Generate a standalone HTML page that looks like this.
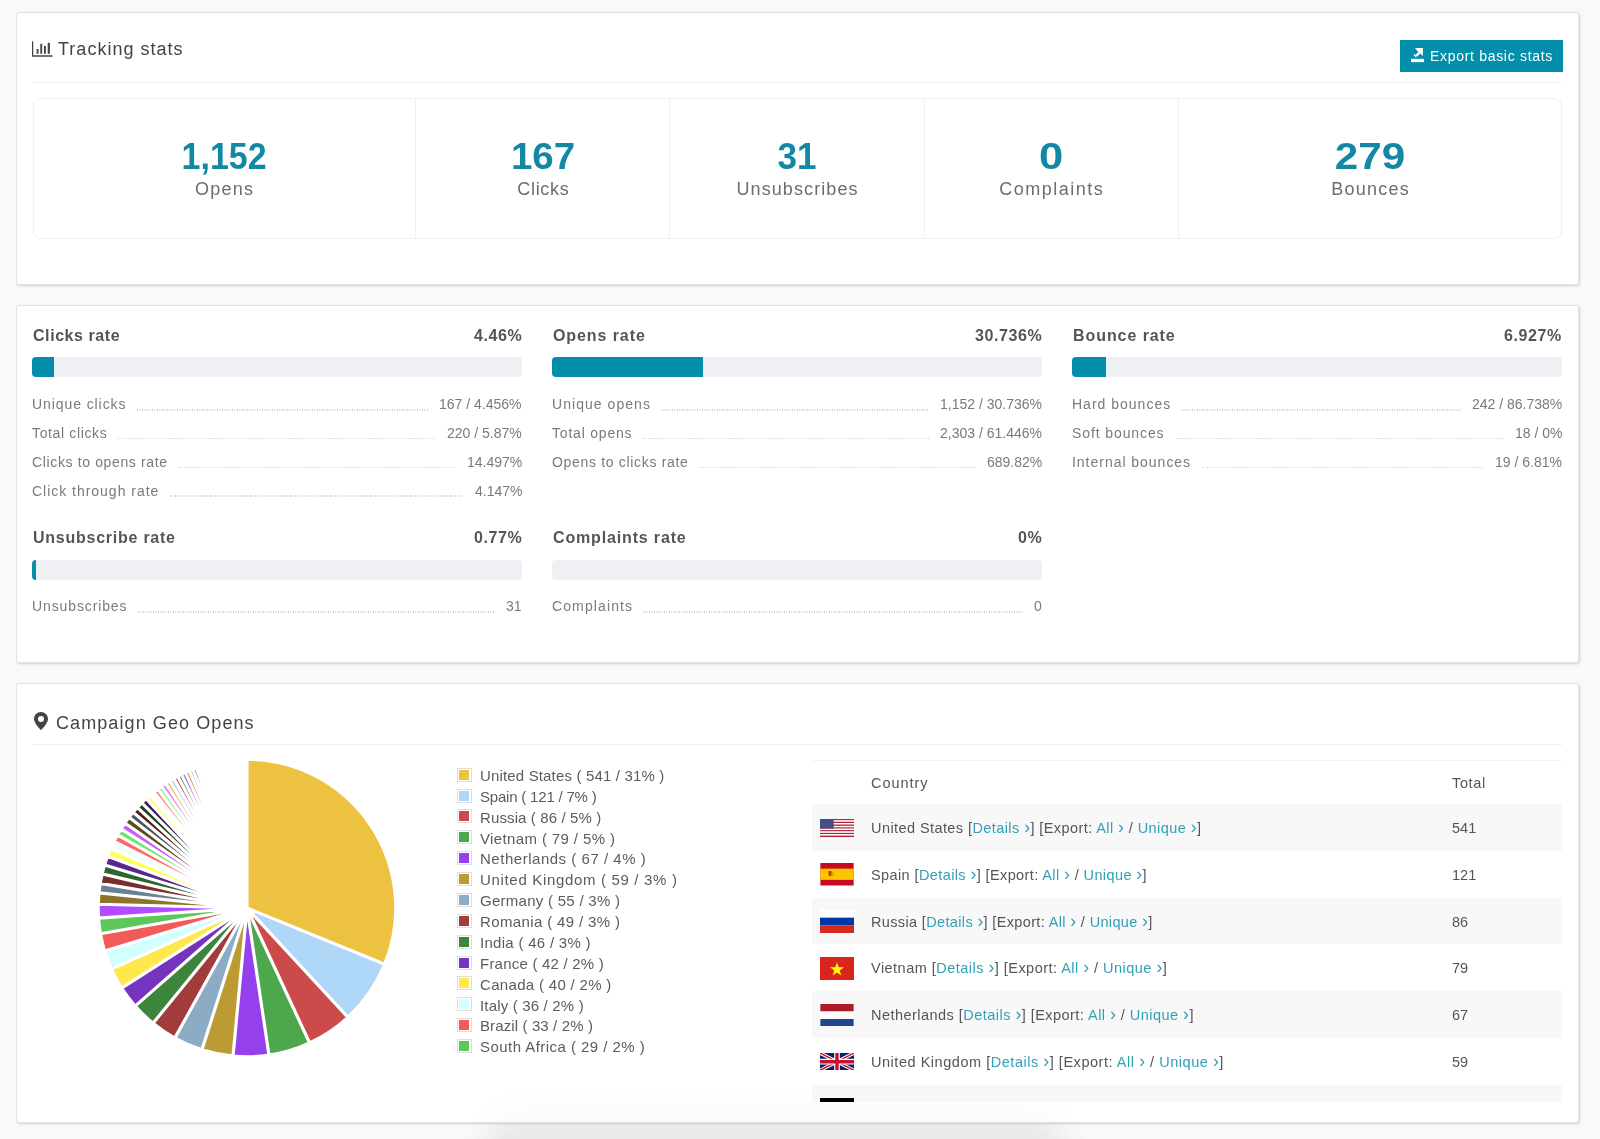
<!DOCTYPE html>
<html><head><meta charset="utf-8"><style>
*{box-sizing:border-box;margin:0;padding:0}
html,body{width:1600px;height:1139px;overflow:hidden}
body{background:#f9f9fa;font-family:"Liberation Sans",sans-serif;color:#555;position:relative}
.t{position:absolute;white-space:nowrap;will-change:transform}
.b{position:absolute}
.card{position:absolute;background:#fff;border:1px solid #e3e3e7;border-radius:3px;box-shadow:1px 1px 2.5px rgba(0,0,0,.16)}
.dots{position:absolute;height:1.5px;background-image:linear-gradient(to right,#c8c8c8 50%,transparent 50%);background-size:2.5px 1.5px}
.tbl{position:absolute;overflow:hidden}
.tbl a{color:#32a0b7}
.ch{font-style:normal;font-size:17.5px;line-height:0}
svg{position:absolute;display:block}
</style></head><body>
<div class="card" style="left:16px;top:12px;width:1563px;height:272.5px"></div>
<svg style="left:32px;top:41px" width="21" height="16" viewBox="0 0 21 16"><path d="M0.6 0.2v14.8H20.6" stroke="#444" stroke-width="1.3" fill="none"/><rect x="4.6" y="8" width="1.9" height="4.8" fill="#444"/><rect x="8.3" y="2.8" width="1.9" height="10" fill="#444"/><rect x="12" y="4.9" width="1.9" height="7.9" fill="#444"/><rect x="15.7" y="1.8" width="2.2" height="11" fill="#444"/></svg>
<div class="t " style="top:37.51px;font-size:18px;line-height:22.5px;left:58.00px;color:#444;letter-spacing:1.015px;">Tracking stats</div>
<div class="b" style="left:1400.00px;top:40.00px;width:163.00px;height:32.00px;background:#038eab"></div>
<svg style="left:1411px;top:48px" width="14" height="15" viewBox="0 0 14 15"><rect x="0" y="10.8" width="13" height="3.3" fill="#fff"/><path d="M3.9 0H11.9V8L9.2 5.6 6.3 8.5 4.6 6.8 7.3 4z" fill="#fff"/><path d="M2.5 6.9l1-1 2.3 2.3-1 1z" fill="#fff"/></svg>
<div class="t " style="top:47.65px;font-size:14px;line-height:17.5px;left:1429.50px;color:#fff;letter-spacing:0.694px;">Export basic stats</div>
<div class="b" style="left:32.00px;top:82.00px;width:1530.00px;height:1.00px;background:#efefef"></div>
<div class="b" style="left:33px;top:98px;width:1529px;height:141px;border:1px solid #efefef;border-radius:8px"></div>
<div class="b" style="left:415.10px;top:99.00px;width:1.00px;height:139.00px;background:#f1f1f1"></div>
<div class="b" style="left:668.90px;top:99.00px;width:1.00px;height:139.00px;background:#f1f1f1"></div>
<div class="b" style="left:923.50px;top:99.00px;width:1.00px;height:139.00px;background:#f1f1f1"></div>
<div class="b" style="left:1177.50px;top:99.00px;width:1.00px;height:139.00px;background:#f1f1f1"></div>
<div class="t " style="top:134.33px;font-size:36px;line-height:45.0px;left:-275.70px;width:1000px;text-align:center;text-indent:0px;color:#1388a5;font-weight:bold;"><span style="display:inline-block;transform:scaleX(0.943)">1,152</span></div>
<div class="t " style="top:177.51px;font-size:18px;line-height:22.5px;left:-275.70px;width:1000px;text-align:center;text-indent:1.25px;color:#6d6d6d;letter-spacing:1.25px;">Opens</div>
<div class="t " style="top:134.33px;font-size:36px;line-height:45.0px;left:42.50px;width:1000px;text-align:center;text-indent:0px;color:#1388a5;font-weight:bold;"><span style="display:inline-block;transform:scaleX(1.070)">167</span></div>
<div class="t " style="top:177.51px;font-size:18px;line-height:22.5px;left:42.50px;width:1000px;text-align:center;text-indent:0.72px;color:#6d6d6d;letter-spacing:0.72px;">Clicks</div>
<div class="t " style="top:134.33px;font-size:36px;line-height:45.0px;left:296.70px;width:1000px;text-align:center;text-indent:0px;color:#1388a5;font-weight:bold;"><span style="display:inline-block;transform:scaleX(0.974)">31</span></div>
<div class="t " style="top:177.51px;font-size:18px;line-height:22.5px;left:296.70px;width:1000px;text-align:center;text-indent:1.091px;color:#6d6d6d;letter-spacing:1.091px;">Unsubscribes</div>
<div class="t " style="top:134.33px;font-size:36px;line-height:45.0px;left:551.00px;width:1000px;text-align:center;text-indent:0px;color:#1388a5;font-weight:bold;"><span style="display:inline-block;transform:scaleX(1.211)">0</span></div>
<div class="t " style="top:177.51px;font-size:18px;line-height:22.5px;left:551.00px;width:1000px;text-align:center;text-indent:1.511px;color:#6d6d6d;letter-spacing:1.511px;">Complaints</div>
<div class="t " style="top:134.33px;font-size:36px;line-height:45.0px;left:870.00px;width:1000px;text-align:center;text-indent:0px;color:#1388a5;font-weight:bold;"><span style="display:inline-block;transform:scaleX(1.172)">279</span></div>
<div class="t " style="top:177.51px;font-size:18px;line-height:22.5px;left:870.00px;width:1000px;text-align:center;text-indent:1.25px;color:#6d6d6d;letter-spacing:1.25px;">Bounces</div>
<div class="card" style="left:16px;top:305px;width:1563px;height:358px"></div>
<div class="t " style="top:325.76px;font-size:16px;line-height:20.0px;left:32.50px;color:#555;letter-spacing:0.57px;font-weight:bold;">Clicks rate</div>
<div class="t " style="top:325.76px;font-size:16px;line-height:20.0px;right:1078.00px;color:#555;letter-spacing:0.6px;font-weight:bold;">4.46%</div>
<div class="b" style="left:32.00px;top:357.40px;width:490.00px;height:20.00px;background:#eef0f3;border-radius:4px"></div>
<div class="b" style="left:32.00px;top:357.40px;width:22.00px;height:20.00px;background:#038eab;border-radius:4px 0 0 4px"></div>
<div class="t " style="top:396.40px;font-size:14px;line-height:17.5px;left:32.30px;color:#7a7a7a;letter-spacing:0.917px;">Unique clicks</div>
<div class="t " style="top:396.40px;font-size:14px;line-height:17.5px;right:1078.00px;color:#7a7a7a;">167 / 4.456%</div>
<div class="dots" style="left:137.4px;top:409.0px;width:291.1px"></div>
<div class="t " style="top:425.15px;font-size:14px;line-height:17.5px;left:32.30px;color:#7a7a7a;letter-spacing:0.636px;">Total clicks</div>
<div class="t " style="top:425.15px;font-size:14px;line-height:17.5px;right:1078.00px;color:#7a7a7a;">220 / 5.87%</div>
<div class="dots" style="left:118.3px;top:437.8px;width:317.9px"></div>
<div class="t " style="top:453.90px;font-size:14px;line-height:17.5px;left:32.30px;color:#7a7a7a;letter-spacing:0.637px;">Clicks to opens rate</div>
<div class="t " style="top:453.90px;font-size:14px;line-height:17.5px;right:1078.00px;color:#7a7a7a;">14.497%</div>
<div class="dots" style="left:178.7px;top:466.5px;width:277.0px"></div>
<div class="t " style="top:482.65px;font-size:14px;line-height:17.5px;left:32.30px;color:#7a7a7a;letter-spacing:0.976px;">Click through rate</div>
<div class="t " style="top:482.65px;font-size:14px;line-height:17.5px;right:1078.00px;color:#7a7a7a;">4.147%</div>
<div class="dots" style="left:170.3px;top:495.2px;width:293.2px"></div>
<div class="t " style="top:527.96px;font-size:16px;line-height:20.0px;left:32.50px;color:#555;letter-spacing:0.753px;font-weight:bold;">Unsubscribe rate</div>
<div class="t " style="top:527.96px;font-size:16px;line-height:20.0px;right:1078.00px;color:#555;letter-spacing:0.6px;font-weight:bold;">0.77%</div>
<div class="b" style="left:32.00px;top:559.60px;width:490.00px;height:20.00px;background:#eef0f3;border-radius:4px"></div>
<div class="b" style="left:32.00px;top:559.60px;width:3.80px;height:20.00px;background:#038eab;border-radius:4px 0 0 4px"></div>
<div class="t " style="top:598.40px;font-size:14px;line-height:17.5px;left:32.30px;color:#7a7a7a;letter-spacing:0.882px;">Unsubscribes</div>
<div class="t " style="top:598.40px;font-size:14px;line-height:17.5px;right:1078.00px;color:#7a7a7a;">31</div>
<div class="dots" style="left:138.4px;top:611.0px;width:357.0px"></div>
<div class="t " style="top:325.76px;font-size:16px;line-height:20.0px;left:552.50px;color:#555;letter-spacing:0.911px;font-weight:bold;">Opens rate</div>
<div class="t " style="top:325.76px;font-size:16px;line-height:20.0px;right:558.00px;color:#555;letter-spacing:0.6px;font-weight:bold;">30.736%</div>
<div class="b" style="left:552.00px;top:357.40px;width:490.00px;height:20.00px;background:#eef0f3;border-radius:4px"></div>
<div class="b" style="left:552.00px;top:357.40px;width:151.00px;height:20.00px;background:#038eab;border-radius:4px 0 0 4px"></div>
<div class="t " style="top:396.40px;font-size:14px;line-height:17.5px;left:552.30px;color:#7a7a7a;letter-spacing:1.045px;">Unique opens</div>
<div class="t " style="top:396.40px;font-size:14px;line-height:17.5px;right:558.00px;color:#7a7a7a;">1,152 / 30.736%</div>
<div class="dots" style="left:662.0px;top:409.0px;width:267.1px"></div>
<div class="t " style="top:425.15px;font-size:14px;line-height:17.5px;left:552.30px;color:#7a7a7a;letter-spacing:0.8px;">Total opens</div>
<div class="t " style="top:425.15px;font-size:14px;line-height:17.5px;right:558.00px;color:#7a7a7a;">2,303 / 61.446%</div>
<div class="dots" style="left:643.4px;top:437.8px;width:285.6px"></div>
<div class="t " style="top:453.90px;font-size:14px;line-height:17.5px;left:552.30px;color:#7a7a7a;letter-spacing:0.679px;">Opens to clicks rate</div>
<div class="t " style="top:453.90px;font-size:14px;line-height:17.5px;right:558.00px;color:#7a7a7a;">689.82%</div>
<div class="dots" style="left:699.5px;top:466.5px;width:276.2px"></div>
<div class="t " style="top:527.96px;font-size:16px;line-height:20.0px;left:552.50px;color:#555;letter-spacing:0.843px;font-weight:bold;">Complaints rate</div>
<div class="t " style="top:527.96px;font-size:16px;line-height:20.0px;right:558.00px;color:#555;letter-spacing:0.6px;font-weight:bold;">0%</div>
<div class="b" style="left:552.00px;top:559.60px;width:490.00px;height:20.00px;background:#eef0f3;border-radius:4px"></div>
<div class="t " style="top:598.40px;font-size:14px;line-height:17.5px;left:552.30px;color:#7a7a7a;letter-spacing:1.111px;">Complaints</div>
<div class="t " style="top:598.40px;font-size:14px;line-height:17.5px;right:558.00px;color:#7a7a7a;">0</div>
<div class="dots" style="left:644.1px;top:611.0px;width:379.1px"></div>
<div class="t " style="top:325.76px;font-size:16px;line-height:20.0px;left:1072.50px;color:#555;letter-spacing:0.93px;font-weight:bold;">Bounce rate</div>
<div class="t " style="top:325.76px;font-size:16px;line-height:20.0px;right:38.00px;color:#555;letter-spacing:0.6px;font-weight:bold;">6.927%</div>
<div class="b" style="left:1072.00px;top:357.40px;width:490.00px;height:20.00px;background:#eef0f3;border-radius:4px"></div>
<div class="b" style="left:1072.00px;top:357.40px;width:34.00px;height:20.00px;background:#038eab;border-radius:4px 0 0 4px"></div>
<div class="t " style="top:396.40px;font-size:14px;line-height:17.5px;left:1072.30px;color:#7a7a7a;letter-spacing:1.0px;">Hard bounces</div>
<div class="t " style="top:396.40px;font-size:14px;line-height:17.5px;right:38.00px;color:#7a7a7a;">242 / 86.738%</div>
<div class="dots" style="left:1182.2px;top:409.0px;width:278.5px"></div>
<div class="t " style="top:425.15px;font-size:14px;line-height:17.5px;left:1072.30px;color:#7a7a7a;letter-spacing:0.9px;">Soft bounces</div>
<div class="t " style="top:425.15px;font-size:14px;line-height:17.5px;right:38.00px;color:#7a7a7a;">18 / 0%</div>
<div class="dots" style="left:1175.5px;top:437.8px;width:328.0px"></div>
<div class="t " style="top:453.90px;font-size:14px;line-height:17.5px;left:1072.30px;color:#7a7a7a;letter-spacing:0.973px;">Internal bounces</div>
<div class="t " style="top:453.90px;font-size:14px;line-height:17.5px;right:38.00px;color:#7a7a7a;">19 / 6.81%</div>
<div class="dots" style="left:1202.1px;top:466.5px;width:282.0px"></div>
<div class="b" style="left:480px;top:1118px;width:590px;height:90px;border-radius:45px;background:rgba(0,0,0,.045);filter:blur(12px)"></div>
<div class="card" style="left:16px;top:683.3px;width:1563px;height:440px"></div>
<svg style="left:34px;top:712px" width="14" height="18" viewBox="0 0 14 18"><path d="M7 0C3.1 0 0 3.1 0 7c0 4.4 7 11 7 11s7-6.6 7-11c0-3.9-3.1-7-7-7zm0 10A3 3 0 1 1 7 4a3 3 0 0 1 0 6z" fill="#444"/></svg>
<div class="t " style="top:711.51px;font-size:18px;line-height:22.5px;left:56.00px;color:#444;letter-spacing:1.088px;">Campaign Geo Opens</div>
<div class="b" style="left:32.00px;top:744.00px;width:1530.00px;height:1.00px;background:#efefef"></div>
<svg style="left:97.25px;top:758.4px" width="300" height="300" viewBox="0 0 300 300"><path d="M150.00 150.00L150.00 1.20A148.8 148.8 0 0 1 287.78 206.20Z" fill="#edc240"/><path d="M150.00 150.00L287.78 206.20A148.8 148.8 0 0 1 250.95 259.32Z" fill="#afd8f8"/><path d="M150.00 150.00L250.95 259.32A148.8 148.8 0 0 1 212.61 284.98Z" fill="#cb4b4b"/><path d="M150.00 150.00L212.61 284.98A148.8 148.8 0 0 1 172.00 297.16Z" fill="#4da74d"/><path d="M150.00 150.00L172.00 297.16A148.8 148.8 0 0 1 136.02 298.14Z" fill="#9440ed"/><path d="M150.00 150.00L136.02 298.14A148.8 148.8 0 0 1 104.94 291.81Z" fill="#bd9b33"/><path d="M150.00 150.00L104.94 291.81A148.8 148.8 0 0 1 77.79 280.10Z" fill="#8cacc6"/><path d="M150.00 150.00L77.79 280.10A148.8 148.8 0 0 1 55.97 265.32Z" fill="#a23c3c"/><path d="M150.00 150.00L55.97 265.32A148.8 148.8 0 0 1 38.16 248.14Z" fill="#3d853d"/><path d="M150.00 150.00L38.16 248.14A148.8 148.8 0 0 1 24.58 230.08Z" fill="#7633bd"/><path d="M150.00 150.00L24.58 230.08A148.8 148.8 0 0 1 14.34 211.14Z" fill="#ffe84c"/><path d="M150.00 150.00L14.34 211.14A148.8 148.8 0 0 1 7.55 193.00Z" fill="#d2ffff"/><path d="M150.00 150.00L7.55 193.00A148.8 148.8 0 0 1 3.44 175.72Z" fill="#f35a5a"/><path d="M150.00 150.00L3.44 175.72A148.8 148.8 0 0 1 1.55 160.22Z" fill="#5cc85c"/><path d="M150.00 150.00L1.55 160.22A148.8 148.8 0 0 1 1.25 146.23Z" fill="#b14cff"/><path d="M150.00 150.00L1.25 146.23A148.8 148.8 0 0 1 1.96 134.95Z" fill="#8e7426"/><path d="M150.00 150.00L1.96 134.95A148.8 148.8 0 0 1 3.26 125.34Z" fill="#698194"/><path d="M150.00 150.00L3.26 125.34A148.8 148.8 0 0 1 5.17 115.84Z" fill="#792d2d"/><path d="M150.00 150.00L5.17 115.84A148.8 148.8 0 0 1 7.55 107.00Z" fill="#2e642e"/><path d="M150.00 150.00L7.55 107.00A148.8 148.8 0 0 1 10.46 98.32Z" fill="#58268e"/><path d="M150.00 150.00L10.46 98.32A148.8 148.8 0 0 1 13.69 90.33Z" fill="#ffff59"/><path d="M150.00 150.00L13.69 90.33A148.8 148.8 0 0 1 16.88 83.50Z" fill="#f4ffff"/><path d="M150.00 150.00L16.88 83.50A148.8 148.8 0 0 1 20.42 76.85Z" fill="#ff6969"/><path d="M150.00 150.00L20.42 76.85A148.8 148.8 0 0 1 24.01 70.83Z" fill="#6be96b"/><path d="M150.00 150.00L24.01 70.83A148.8 148.8 0 0 1 27.87 65.00Z" fill="#cf59ff"/><path d="M150.00 150.00L27.87 65.00A148.8 148.8 0 0 1 32.00 59.35Z" fill="#5e4d19"/><path d="M150.00 150.00L32.00 59.35A148.8 148.8 0 0 1 36.05 54.31Z" fill="#455663"/><path d="M150.00 150.00L36.05 54.31A148.8 148.8 0 0 1 40.31 49.45Z" fill="#511d1d"/><path d="M150.00 150.00L40.31 49.45A148.8 148.8 0 0 1 44.78 44.78Z" fill="#1e421e"/><path d="M150.00 150.00L44.78 44.78A148.8 148.8 0 0 1 49.05 40.68Z" fill="#3b195e"/><path d="M150.00 150.00L49.05 40.68A148.8 148.8 0 0 1 53.08 37.10Z" fill="#ffff66"/><path d="M150.00 150.00L53.08 37.10A148.8 148.8 0 0 1 56.80 34.00Z" fill="#ffffff"/><path d="M150.00 150.00L56.80 34.00A148.8 148.8 0 0 1 60.63 31.03Z" fill="#ff7878"/><path d="M150.00 150.00L60.63 31.03A148.8 148.8 0 0 1 64.55 28.18Z" fill="#7bff7b"/><path d="M150.00 150.00L64.55 28.18A148.8 148.8 0 0 1 68.57 25.46Z" fill="#ec66ff"/><path d="M150.00 150.00L68.57 25.46A148.8 148.8 0 0 1 72.67 22.87Z" fill="#edc240"/><path d="M150.00 150.00L72.67 22.87A148.8 148.8 0 0 1 76.85 20.42Z" fill="#afd8f8"/><path d="M150.00 150.00L76.85 20.42A148.8 148.8 0 0 1 80.63 18.36Z" fill="#cb4b4b"/><path d="M150.00 150.00L80.63 18.36A148.8 148.8 0 0 1 84.47 16.41Z" fill="#4da74d"/><path d="M150.00 150.00L84.47 16.41A148.8 148.8 0 0 1 88.36 14.57Z" fill="#9440ed"/><path d="M150.00 150.00L88.36 14.57A148.8 148.8 0 0 1 92.31 12.84Z" fill="#bd9b33"/><path d="M150.00 150.00L92.31 12.84A148.8 148.8 0 0 1 95.80 11.42Z" fill="#8cacc6"/><path d="M150.00 150.00L95.80 11.42A148.8 148.8 0 0 1 99.33 10.09Z" fill="#a23c3c"/><path d="M150.00 150.00L99.33 10.09A148.8 148.8 0 0 1 102.38 9.02Z" fill="#3d853d"/><path d="M150.00 150.00L102.38 9.02A148.8 148.8 0 0 1 105.45 8.02Z" fill="#7633bd"/><path d="M150.00 150.00L105.45 8.02A148.8 148.8 0 0 1 108.55 7.09Z" fill="#ffe84c"/><path d="M150.00 150.00L108.55 7.09A148.8 148.8 0 0 1 111.14 6.36Z" fill="#d2ffff"/><path d="M150.00 150.00L111.14 6.36A148.8 148.8 0 0 1 113.75 5.68Z" fill="#f35a5a"/><path d="M150.00 150.00L113.75 5.68A148.8 148.8 0 0 1 116.36 5.05Z" fill="#5cc85c"/><path d="M150.00 150.00L116.36 5.05A148.8 148.8 0 0 1 118.47 4.58Z" fill="#b14cff"/><path d="M150.00 150.00L118.47 4.58A148.8 148.8 0 0 1 120.57 4.14Z" fill="#8e7426"/><path d="M150.00 150.00L120.57 4.14A148.8 148.8 0 0 1 122.69 3.73Z" fill="#698194"/><path d="M150.00 150.00L122.69 3.73A148.8 148.8 0 0 1 124.28 3.44Z" fill="#792d2d"/><path d="M150.00 150.00L124.28 3.44A148.8 148.8 0 0 1 125.87 3.17Z" fill="#2e642e"/><path d="M150.00 150.00L125.87 3.17A148.8 148.8 0 0 1 127.47 2.92Z" fill="#58268e"/><path d="M150.00 150.00L127.47 2.92A148.8 148.8 0 0 1 129.07 2.68Z" fill="#ffff59"/><path d="M150.00 150.00L129.07 2.68A148.8 148.8 0 0 1 130.13 2.53Z" fill="#f4ffff"/><path d="M150.00 150.00L130.13 2.53A148.8 148.8 0 0 1 131.20 2.39Z" fill="#ff6969"/><path d="M150.00 150.00L131.20 2.39A148.8 148.8 0 0 1 132.27 2.26Z" fill="#6be96b"/><path d="M150.00 150.00L132.27 2.26A148.8 148.8 0 0 1 133.34 2.14Z" fill="#cf59ff"/><path d="M150.00 150.00L133.34 2.14A148.8 148.8 0 0 1 134.41 2.02Z" fill="#5e4d19"/><path d="M150.00 150.00L134.41 2.02A148.8 148.8 0 0 1 135.48 1.91Z" fill="#455663"/><path d="M150.00 150.00L135.48 1.91A148.8 148.8 0 0 1 136.55 1.81Z" fill="#511d1d"/><path d="M150.00 150.00L136.55 1.81A148.8 148.8 0 0 1 137.63 1.72Z" fill="#1e421e"/><path d="M150.00 150.00L137.63 1.72A148.8 148.8 0 0 1 138.16 1.67Z" fill="#3b195e"/><path d="M150.00 150.00L138.16 1.67A148.8 148.8 0 0 1 138.70 1.63Z" fill="#ffff66"/><path d="M150.00 150.00L138.70 1.63A148.8 148.8 0 0 1 139.24 1.59Z" fill="#ffffff"/><path d="M150.00 150.00L139.24 1.59A148.8 148.8 0 0 1 139.78 1.55Z" fill="#ff7878"/><path d="M150.00 150.00L139.78 1.55A148.8 148.8 0 0 1 140.31 1.52Z" fill="#7bff7b"/><path d="M150.00 150.00L140.31 1.52A148.8 148.8 0 0 1 140.85 1.48Z" fill="#ec66ff"/><path d="M150.00 150.00L140.85 1.48A148.8 148.8 0 0 1 141.39 1.45Z" fill="#edc240"/><path d="M150.00 150.00L141.39 1.45A148.8 148.8 0 0 1 141.93 1.42Z" fill="#afd8f8"/><path d="M150.00 150.00L141.93 1.42A148.8 148.8 0 0 1 142.46 1.39Z" fill="#cb4b4b"/><path d="M150.00 150.00L142.46 1.39A148.8 148.8 0 0 1 143.00 1.36Z" fill="#4da74d"/><path d="M150.00 150.00L143.00 1.36A148.8 148.8 0 0 1 143.54 1.34Z" fill="#9440ed"/><path d="M150.00 150.00L143.54 1.34A148.8 148.8 0 0 1 144.08 1.32Z" fill="#bd9b33"/><path d="M150.00 150.00L144.08 1.32A148.8 148.8 0 0 1 144.62 1.30Z" fill="#8cacc6"/><path d="M150.00 150.00L144.62 1.30A148.8 148.8 0 0 1 145.15 1.28Z" fill="#a23c3c"/><path d="M150.00 150.00L145.15 1.28A148.8 148.8 0 0 1 145.69 1.26Z" fill="#3d853d"/><path d="M150.00 150.00L145.69 1.26A148.8 148.8 0 0 1 146.23 1.25Z" fill="#7633bd"/><path d="M150.00 150.00L146.23 1.25A148.8 148.8 0 0 1 146.77 1.24Z" fill="#ffe84c"/><path d="M150.00 150.00L146.77 1.24A148.8 148.8 0 0 1 147.31 1.22Z" fill="#d2ffff"/><path d="M150.00 150.00L147.31 1.22A148.8 148.8 0 0 1 147.85 1.22Z" fill="#f35a5a"/><path d="M150.00 150.00L147.85 1.22A148.8 148.8 0 0 1 148.38 1.21Z" fill="#5cc85c"/><path d="M150.00 150.00L148.38 1.21A148.8 148.8 0 0 1 148.92 1.20Z" fill="#b14cff"/><path d="M150.00 150.00L148.92 1.20A148.8 148.8 0 0 1 149.46 1.20Z" fill="#8e7426"/><path d="M150.00 150.00L149.46 1.20A148.8 148.8 0 0 1 150.00 1.20Z" fill="#698194"/><path d="M150.00 150.00L150.00 1.20A148.8 148.8 0 0 1 287.78 206.20ZM150.00 150.00L287.78 206.20A148.8 148.8 0 0 1 250.95 259.32ZM150.00 150.00L250.95 259.32A148.8 148.8 0 0 1 212.61 284.98ZM150.00 150.00L212.61 284.98A148.8 148.8 0 0 1 172.00 297.16ZM150.00 150.00L172.00 297.16A148.8 148.8 0 0 1 136.02 298.14ZM150.00 150.00L136.02 298.14A148.8 148.8 0 0 1 104.94 291.81ZM150.00 150.00L104.94 291.81A148.8 148.8 0 0 1 77.79 280.10ZM150.00 150.00L77.79 280.10A148.8 148.8 0 0 1 55.97 265.32ZM150.00 150.00L55.97 265.32A148.8 148.8 0 0 1 38.16 248.14ZM150.00 150.00L38.16 248.14A148.8 148.8 0 0 1 24.58 230.08ZM150.00 150.00L24.58 230.08A148.8 148.8 0 0 1 14.34 211.14ZM150.00 150.00L14.34 211.14A148.8 148.8 0 0 1 7.55 193.00ZM150.00 150.00L7.55 193.00A148.8 148.8 0 0 1 3.44 175.72ZM150.00 150.00L3.44 175.72A148.8 148.8 0 0 1 1.55 160.22ZM150.00 150.00L1.55 160.22A148.8 148.8 0 0 1 1.25 146.23ZM150.00 150.00L1.25 146.23A148.8 148.8 0 0 1 1.96 134.95ZM150.00 150.00L1.96 134.95A148.8 148.8 0 0 1 3.26 125.34ZM150.00 150.00L3.26 125.34A148.8 148.8 0 0 1 5.17 115.84ZM150.00 150.00L5.17 115.84A148.8 148.8 0 0 1 7.55 107.00ZM150.00 150.00L7.55 107.00A148.8 148.8 0 0 1 10.46 98.32ZM150.00 150.00L10.46 98.32A148.8 148.8 0 0 1 13.69 90.33ZM150.00 150.00L13.69 90.33A148.8 148.8 0 0 1 16.88 83.50ZM150.00 150.00L16.88 83.50A148.8 148.8 0 0 1 20.42 76.85ZM150.00 150.00L20.42 76.85A148.8 148.8 0 0 1 24.01 70.83ZM150.00 150.00L24.01 70.83A148.8 148.8 0 0 1 27.87 65.00ZM150.00 150.00L27.87 65.00A148.8 148.8 0 0 1 32.00 59.35ZM150.00 150.00L32.00 59.35A148.8 148.8 0 0 1 36.05 54.31ZM150.00 150.00L36.05 54.31A148.8 148.8 0 0 1 40.31 49.45ZM150.00 150.00L40.31 49.45A148.8 148.8 0 0 1 44.78 44.78ZM150.00 150.00L44.78 44.78A148.8 148.8 0 0 1 49.05 40.68ZM150.00 150.00L49.05 40.68A148.8 148.8 0 0 1 53.08 37.10ZM150.00 150.00L53.08 37.10A148.8 148.8 0 0 1 56.80 34.00ZM150.00 150.00L56.80 34.00A148.8 148.8 0 0 1 60.63 31.03ZM150.00 150.00L60.63 31.03A148.8 148.8 0 0 1 64.55 28.18ZM150.00 150.00L64.55 28.18A148.8 148.8 0 0 1 68.57 25.46ZM150.00 150.00L68.57 25.46A148.8 148.8 0 0 1 72.67 22.87ZM150.00 150.00L72.67 22.87A148.8 148.8 0 0 1 76.85 20.42ZM150.00 150.00L76.85 20.42A148.8 148.8 0 0 1 80.63 18.36ZM150.00 150.00L80.63 18.36A148.8 148.8 0 0 1 84.47 16.41ZM150.00 150.00L84.47 16.41A148.8 148.8 0 0 1 88.36 14.57ZM150.00 150.00L88.36 14.57A148.8 148.8 0 0 1 92.31 12.84ZM150.00 150.00L92.31 12.84A148.8 148.8 0 0 1 95.80 11.42ZM150.00 150.00L95.80 11.42A148.8 148.8 0 0 1 99.33 10.09ZM150.00 150.00L99.33 10.09A148.8 148.8 0 0 1 102.38 9.02ZM150.00 150.00L102.38 9.02A148.8 148.8 0 0 1 105.45 8.02ZM150.00 150.00L105.45 8.02A148.8 148.8 0 0 1 108.55 7.09ZM150.00 150.00L108.55 7.09A148.8 148.8 0 0 1 111.14 6.36ZM150.00 150.00L111.14 6.36A148.8 148.8 0 0 1 113.75 5.68ZM150.00 150.00L113.75 5.68A148.8 148.8 0 0 1 116.36 5.05ZM150.00 150.00L116.36 5.05A148.8 148.8 0 0 1 118.47 4.58ZM150.00 150.00L118.47 4.58A148.8 148.8 0 0 1 120.57 4.14ZM150.00 150.00L120.57 4.14A148.8 148.8 0 0 1 122.69 3.73ZM150.00 150.00L122.69 3.73A148.8 148.8 0 0 1 124.28 3.44ZM150.00 150.00L124.28 3.44A148.8 148.8 0 0 1 125.87 3.17ZM150.00 150.00L125.87 3.17A148.8 148.8 0 0 1 127.47 2.92ZM150.00 150.00L127.47 2.92A148.8 148.8 0 0 1 129.07 2.68ZM150.00 150.00L129.07 2.68A148.8 148.8 0 0 1 130.13 2.53ZM150.00 150.00L130.13 2.53A148.8 148.8 0 0 1 131.20 2.39ZM150.00 150.00L131.20 2.39A148.8 148.8 0 0 1 132.27 2.26ZM150.00 150.00L132.27 2.26A148.8 148.8 0 0 1 133.34 2.14ZM150.00 150.00L133.34 2.14A148.8 148.8 0 0 1 134.41 2.02ZM150.00 150.00L134.41 2.02A148.8 148.8 0 0 1 135.48 1.91ZM150.00 150.00L135.48 1.91A148.8 148.8 0 0 1 136.55 1.81ZM150.00 150.00L136.55 1.81A148.8 148.8 0 0 1 137.63 1.72ZM150.00 150.00L137.63 1.72A148.8 148.8 0 0 1 138.16 1.67ZM150.00 150.00L138.16 1.67A148.8 148.8 0 0 1 138.70 1.63ZM150.00 150.00L138.70 1.63A148.8 148.8 0 0 1 139.24 1.59ZM150.00 150.00L139.24 1.59A148.8 148.8 0 0 1 139.78 1.55ZM150.00 150.00L139.78 1.55A148.8 148.8 0 0 1 140.31 1.52ZM150.00 150.00L140.31 1.52A148.8 148.8 0 0 1 140.85 1.48ZM150.00 150.00L140.85 1.48A148.8 148.8 0 0 1 141.39 1.45ZM150.00 150.00L141.39 1.45A148.8 148.8 0 0 1 141.93 1.42ZM150.00 150.00L141.93 1.42A148.8 148.8 0 0 1 142.46 1.39ZM150.00 150.00L142.46 1.39A148.8 148.8 0 0 1 143.00 1.36ZM150.00 150.00L143.00 1.36A148.8 148.8 0 0 1 143.54 1.34ZM150.00 150.00L143.54 1.34A148.8 148.8 0 0 1 144.08 1.32ZM150.00 150.00L144.08 1.32A148.8 148.8 0 0 1 144.62 1.30ZM150.00 150.00L144.62 1.30A148.8 148.8 0 0 1 145.15 1.28ZM150.00 150.00L145.15 1.28A148.8 148.8 0 0 1 145.69 1.26ZM150.00 150.00L145.69 1.26A148.8 148.8 0 0 1 146.23 1.25ZM150.00 150.00L146.23 1.25A148.8 148.8 0 0 1 146.77 1.24ZM150.00 150.00L146.77 1.24A148.8 148.8 0 0 1 147.31 1.22ZM150.00 150.00L147.31 1.22A148.8 148.8 0 0 1 147.85 1.22ZM150.00 150.00L147.85 1.22A148.8 148.8 0 0 1 148.38 1.21ZM150.00 150.00L148.38 1.21A148.8 148.8 0 0 1 148.92 1.20ZM150.00 150.00L148.92 1.20A148.8 148.8 0 0 1 149.46 1.20ZM150.00 150.00L149.46 1.20A148.8 148.8 0 0 1 150.00 1.20Z" fill="none" stroke="#fff" stroke-width="3.2" stroke-linejoin="round"/></svg>
<div class="b" style="left:457.3px;top:767.75px;width:14.3px;height:14px;border:1px solid #ddd;padding:1px;background:#fff"><div style="width:10px;height:10px;background:#edc240"></div></div>
<div class="t " style="top:766.93px;font-size:15px;line-height:18.75px;left:479.50px;color:#5c5c5c;letter-spacing:0.158px;">United States ( 541 / 31% )</div>
<div class="b" style="left:457.3px;top:788.62px;width:14.3px;height:14px;border:1px solid #ddd;padding:1px;background:#fff"><div style="width:10px;height:10px;background:#afd8f8"></div></div>
<div class="t " style="top:787.80px;font-size:15px;line-height:18.75px;left:479.50px;color:#5c5c5c;letter-spacing:-0.2px;">Spain ( 121 / 7% )</div>
<div class="b" style="left:457.3px;top:809.49px;width:14.3px;height:14px;border:1px solid #ddd;padding:1px;background:#fff"><div style="width:10px;height:10px;background:#cb4b4b"></div></div>
<div class="t " style="top:808.67px;font-size:15px;line-height:18.75px;left:479.50px;color:#5c5c5c;letter-spacing:0.118px;">Russia ( 86 / 5% )</div>
<div class="b" style="left:457.3px;top:830.36px;width:14.3px;height:14px;border:1px solid #ddd;padding:1px;background:#fff"><div style="width:10px;height:10px;background:#4da74d"></div></div>
<div class="t " style="top:829.54px;font-size:15px;line-height:18.75px;left:479.50px;color:#5c5c5c;letter-spacing:0.378px;">Vietnam ( 79 / 5% )</div>
<div class="b" style="left:457.3px;top:851.23px;width:14.3px;height:14px;border:1px solid #ddd;padding:1px;background:#fff"><div style="width:10px;height:10px;background:#9440ed"></div></div>
<div class="t " style="top:850.41px;font-size:15px;line-height:18.75px;left:479.50px;color:#5c5c5c;letter-spacing:0.523px;">Netherlands ( 67 / 4% )</div>
<div class="b" style="left:457.3px;top:872.10px;width:14.3px;height:14px;border:1px solid #ddd;padding:1px;background:#fff"><div style="width:10px;height:10px;background:#bd9b33"></div></div>
<div class="t " style="top:871.28px;font-size:15px;line-height:18.75px;left:479.50px;color:#5c5c5c;letter-spacing:0.672px;">United Kingdom ( 59 / 3% )</div>
<div class="b" style="left:457.3px;top:892.97px;width:14.3px;height:14px;border:1px solid #ddd;padding:1px;background:#fff"><div style="width:10px;height:10px;background:#8cacc6"></div></div>
<div class="t " style="top:892.15px;font-size:15px;line-height:18.75px;left:479.50px;color:#5c5c5c;letter-spacing:0.272px;">Germany ( 55 / 3% )</div>
<div class="b" style="left:457.3px;top:913.84px;width:14.3px;height:14px;border:1px solid #ddd;padding:1px;background:#fff"><div style="width:10px;height:10px;background:#a23c3c"></div></div>
<div class="t " style="top:913.02px;font-size:15px;line-height:18.75px;left:479.50px;color:#5c5c5c;letter-spacing:0.367px;">Romania ( 49 / 3% )</div>
<div class="b" style="left:457.3px;top:934.71px;width:14.3px;height:14px;border:1px solid #ddd;padding:1px;background:#fff"><div style="width:10px;height:10px;background:#3d853d"></div></div>
<div class="t " style="top:933.89px;font-size:15px;line-height:18.75px;left:479.50px;color:#5c5c5c;letter-spacing:0.294px;">India ( 46 / 3% )</div>
<div class="b" style="left:457.3px;top:955.58px;width:14.3px;height:14px;border:1px solid #ddd;padding:1px;background:#fff"><div style="width:10px;height:10px;background:#7633bd"></div></div>
<div class="t " style="top:954.76px;font-size:15px;line-height:18.75px;left:479.50px;color:#5c5c5c;letter-spacing:0.218px;">France ( 42 / 2% )</div>
<div class="b" style="left:457.3px;top:976.45px;width:14.3px;height:14px;border:1px solid #ddd;padding:1px;background:#fff"><div style="width:10px;height:10px;background:#ffe84c"></div></div>
<div class="t " style="top:975.63px;font-size:15px;line-height:18.75px;left:479.50px;color:#5c5c5c;letter-spacing:0.318px;">Canada ( 40 / 2% )</div>
<div class="b" style="left:457.3px;top:997.32px;width:14.3px;height:14px;border:1px solid #ddd;padding:1px;background:#fff"><div style="width:10px;height:10px;background:#d2ffff"></div></div>
<div class="t " style="top:996.50px;font-size:15px;line-height:18.75px;left:479.50px;color:#5c5c5c;letter-spacing:0.175px;">Italy ( 36 / 2% )</div>
<div class="b" style="left:457.3px;top:1018.19px;width:14.3px;height:14px;border:1px solid #ddd;padding:1px;background:#fff"><div style="width:10px;height:10px;background:#f35a5a"></div></div>
<div class="t " style="top:1017.37px;font-size:15px;line-height:18.75px;left:479.50px;color:#5c5c5c;letter-spacing:0.118px;">Brazil ( 33 / 2% )</div>
<div class="b" style="left:457.3px;top:1039.06px;width:14.3px;height:14px;border:1px solid #ddd;padding:1px;background:#fff"><div style="width:10px;height:10px;background:#5cc85c"></div></div>
<div class="t " style="top:1038.24px;font-size:15px;line-height:18.75px;left:479.50px;color:#5c5c5c;letter-spacing:0.452px;">South Africa ( 29 / 2% )</div>
<div class="tbl" style="left:812px;top:760px;width:750px;height:342.3px">
<div class="b" style="left:0.00px;top:0.00px;width:750.00px;height:1.00px;background:#f3f3f3"></div>
<div class="t " style="top:13.92px;font-size:14.5px;line-height:18.12px;left:58.50px;color:#555;letter-spacing:0.958px;">Country</div>
<div class="t " style="top:13.92px;font-size:14.5px;line-height:18.12px;left:640.00px;color:#555;letter-spacing:0.625px;">Total</div>
<div class="b" style="left:0.00px;top:44.00px;width:750.00px;height:46.75px;background:#f8f8f8"></div>
<svg style="left:8px;top:58.9px" width="34" height="18" viewBox="0 0 34 18"><rect y="0.000" width="34" height="1.385" fill="#b22234"/><rect y="1.385" width="34" height="1.385" fill="#fff"/><rect y="2.769" width="34" height="1.385" fill="#b22234"/><rect y="4.154" width="34" height="1.385" fill="#fff"/><rect y="5.538" width="34" height="1.385" fill="#b22234"/><rect y="6.923" width="34" height="1.385" fill="#fff"/><rect y="8.308" width="34" height="1.385" fill="#b22234"/><rect y="9.692" width="34" height="1.385" fill="#fff"/><rect y="11.077" width="34" height="1.385" fill="#b22234"/><rect y="12.462" width="34" height="1.385" fill="#fff"/><rect y="13.846" width="34" height="1.385" fill="#b22234"/><rect y="15.231" width="34" height="1.385" fill="#fff"/><rect y="16.615" width="34" height="1.385" fill="#b22234"/><rect width="13.7" height="9.7" fill="#474d85"/></svg>
<div class="t " style="top:59.12px;font-size:14.5px;line-height:18.12px;left:58.50px;color:#555;letter-spacing:0.42px;">United States [<a>Details <i class="ch">›</i></a>] [Export: <a>All <i class="ch">›</i></a> / <a>Unique <i class="ch">›</i></a>]</div>
<div class="t " style="top:59.12px;font-size:14.5px;line-height:18.12px;left:640.00px;color:#555;">541</div>
<svg style="left:8px;top:103.4px" width="34" height="22.5" viewBox="0 0 34 23"><rect width="34" height="23" fill="#c60b1e"/><rect y="5.75" width="34" height="11.5" fill="#ffc400"/><path d="M8.2 8.6c1.2-.8 3.2-.6 3.8.6.5 1-.2 2.4.4 3.4-.8.9-2.6 1.1-3.6.4-.9-.8-.2-2.1-.6-4.4z" fill="#ad1519" opacity=".75"/><path d="M11 9.5h3v4h-3z" fill="#c8b100" opacity=".8"/></svg>
<div class="t " style="top:105.87px;font-size:14.5px;line-height:18.12px;left:58.50px;color:#555;letter-spacing:0.395px;">Spain [<a>Details <i class="ch">›</i></a>] [Export: <a>All <i class="ch">›</i></a> / <a>Unique <i class="ch">›</i></a>]</div>
<div class="t " style="top:105.87px;font-size:14.5px;line-height:18.12px;left:640.00px;color:#555;">121</div>
<div class="b" style="left:0.00px;top:137.50px;width:750.00px;height:46.75px;background:#f8f8f8"></div>
<svg style="left:8px;top:149.9px" width="34" height="23" viewBox="0 0 34 23"><rect width="34" height="7.67" fill="#fff"/><rect y="7.67" width="34" height="7.67" fill="#0039a6"/><rect y="15.33" width="34" height="7.67" fill="#d52b1e"/></svg>
<div class="t " style="top:152.62px;font-size:14.5px;line-height:18.12px;left:58.50px;color:#555;letter-spacing:0.353px;">Russia [<a>Details <i class="ch">›</i></a>] [Export: <a>All <i class="ch">›</i></a> / <a>Unique <i class="ch">›</i></a>]</div>
<div class="t " style="top:152.62px;font-size:14.5px;line-height:18.12px;left:640.00px;color:#555;">86</div>
<svg style="left:8px;top:196.6px" width="34" height="23" viewBox="0 0 34 23"><rect width="34" height="23" fill="#da251d"/><path d="M17 5.2l1.65 5.1h5.35l-4.33 3.15 1.65 5.1L17 15.4l-4.33 3.15 1.65-5.1-4.33-3.15h5.35z" fill="#ff0"/></svg>
<div class="t " style="top:199.37px;font-size:14.5px;line-height:18.12px;left:58.50px;color:#555;letter-spacing:0.47400000000000003px;">Vietnam [<a>Details <i class="ch">›</i></a>] [Export: <a>All <i class="ch">›</i></a> / <a>Unique <i class="ch">›</i></a>]</div>
<div class="t " style="top:199.37px;font-size:14.5px;line-height:18.12px;left:640.00px;color:#555;">79</div>
<div class="b" style="left:0.00px;top:231.00px;width:750.00px;height:46.75px;background:#f8f8f8"></div>
<svg style="left:8px;top:243.6px" width="34" height="22.5" viewBox="0 0 34 23"><rect width="34" height="7.67" fill="#ae1c28"/><rect y="7.67" width="34" height="7.67" fill="#fff"/><rect y="15.33" width="34" height="7.67" fill="#21468b"/></svg>
<div class="t " style="top:246.12px;font-size:14.5px;line-height:18.12px;left:58.50px;color:#555;letter-spacing:0.465px;">Netherlands [<a>Details <i class="ch">›</i></a>] [Export: <a>All <i class="ch">›</i></a> / <a>Unique <i class="ch">›</i></a>]</div>
<div class="t " style="top:246.12px;font-size:14.5px;line-height:18.12px;left:640.00px;color:#555;">67</div>
<svg style="left:8px;top:292.9px" width="34" height="17.4" viewBox="0 0 60 30" preserveAspectRatio="none"><rect width="60" height="30" fill="#012169"/><path d="M0 0L60 30M60 0L0 30" stroke="#fff" stroke-width="6"/><path d="M0 0L60 30M60 0L0 30" stroke="#c8102e" stroke-width="2.4"/><path d="M30 0v30M0 15h60" stroke="#fff" stroke-width="10"/><path d="M30 0v30M0 15h60" stroke="#c8102e" stroke-width="6"/></svg>
<div class="t " style="top:292.87px;font-size:14.5px;line-height:18.12px;left:58.50px;color:#555;letter-spacing:0.532px;">United Kingdom [<a>Details <i class="ch">›</i></a>] [Export: <a>All <i class="ch">›</i></a> / <a>Unique <i class="ch">›</i></a>]</div>
<div class="t " style="top:292.87px;font-size:14.5px;line-height:18.12px;left:640.00px;color:#555;">59</div>
<div class="b" style="left:0.00px;top:324.50px;width:750.00px;height:46.75px;background:#f8f8f8"></div>
<svg style="left:8px;top:338.2px" width="34" height="20.4" viewBox="0 0 34 20.4"><rect width="34" height="6.8" fill="#000"/><rect y="6.8" width="34" height="6.8" fill="#dd0000"/><rect y="13.6" width="34" height="6.8" fill="#ffce00"/></svg>
<div class="t " style="top:339.62px;font-size:14.5px;line-height:18.12px;left:58.50px;color:#555;letter-spacing:0.43px;">Germany [<a>Details <i class="ch">›</i></a>] [Export: <a>All <i class="ch">›</i></a> / <a>Unique <i class="ch">›</i></a>]</div>
<div class="t " style="top:339.62px;font-size:14.5px;line-height:18.12px;left:640.00px;color:#555;">55</div>
</div>
<div class="b" style="left:480px;top:1108px;width:590px;height:90px;border-radius:45px;background:rgba(0,0,0,.02);filter:blur(14px)"></div>
</body></html>
